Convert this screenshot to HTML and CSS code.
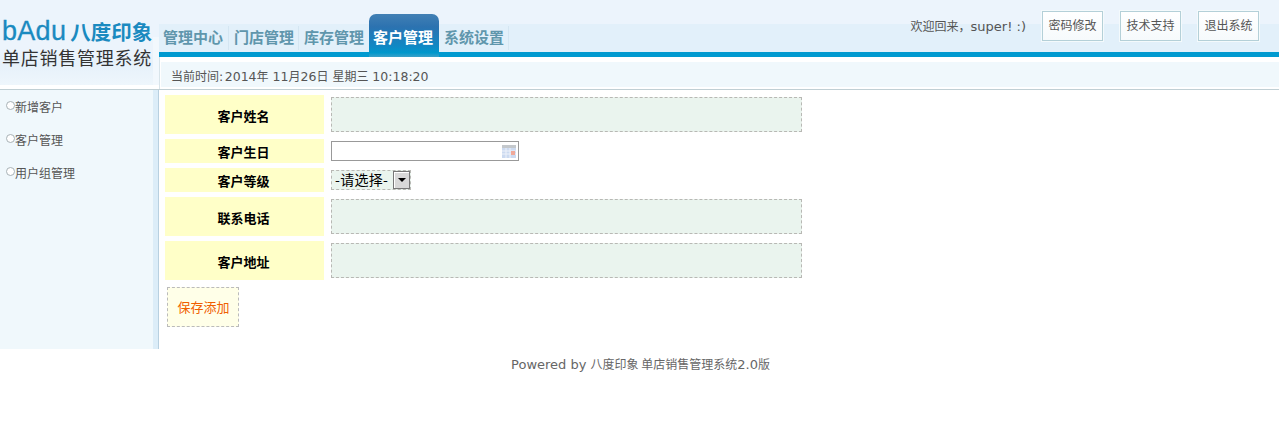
FILE: index.html
```html
<!DOCTYPE html>
<html lang="zh">
<head>
<meta charset="utf-8">
<title>客户管理</title>
<link rel="stylesheet" href="styles.css">
</head>
<body>
<header class="header">
  <div class="logo">
    <div class="logo-inner">
      <div class="logo-top"><span class="logo-en">bAdu</span><span class="logo-cn">八度印象</span></div>
      <div class="logo-sub">单店销售管理系统</div>
    </div>
  </div>
  <div class="header-main">
    <div class="topbar">
      <nav class="nav">
        <a class="nav-item">管理中心</a>
        <a class="nav-item">门店管理</a>
        <a class="nav-item nav-before">库存管理</a>
        <a class="nav-item nav-active">客户管理</a>
        <a class="nav-item">系统设置</a>
      </nav>
      <div class="user">
        <span class="welcome"><span class="cjk">欢迎回来，</span>super! :)</span>
        <a class="user-btn">密码修改</a>
        <a class="user-btn">技术支持</a>
        <a class="user-btn">退出系统</a>
      </div>
    </div>
    <div class="timebar"><span class="cjk time-label">当前时间</span>:<span class="time-date">2014</span><span class="cjk">年</span> 11<span class="cjk">月</span>26<span class="cjk">日</span> <span class="cjk">星期三</span> 10:18:20</div>
  </div>
</header>
<div class="body">
  <aside class="side">
    <ul class="side-list">
      <li class="side-item">新增客户</li>
      <li class="side-item">客户管理</li>
      <li class="side-item">用户组管理</li>
    </ul>
  </aside>
  <main class="main">
    <div class="row row-tall">
      <div class="label">客户姓名</div>
      <div class="field"><div class="input"></div></div>
    </div>
    <div class="row row-short">
      <div class="label">客户生日</div>
      <div class="field">
        <div class="date">
          <svg class="cal" width="14" height="13" viewBox="0 0 14 13">
            <rect x="0" y="0" width="14" height="13" fill="#ccdaf0"/>
            <rect x="0" y="0" width="14" height="3" fill="#c4c8cc"/>
            <path d="M0 6h14M0 9h14M4 3v10M8 3v10" stroke="#eef2fa" stroke-width="1"/>
            <rect x="9" y="6" width="4" height="4" fill="#f0a898"/>
          </svg>
        </div>
      </div>
    </div>
    <div class="row row-short">
      <div class="label">客户等级</div>
      <div class="field">
        <div class="select">
          <span class="select-text">-请选择-</span>
          <span class="select-btn"><i class="caret"></i></span>
        </div>
      </div>
    </div>
    <div class="row row-tall">
      <div class="label">联系电话</div>
      <div class="field"><div class="input"></div></div>
    </div>
    <div class="row row-tall">
      <div class="label">客户地址</div>
      <div class="field"><div class="input"></div></div>
    </div>
    <button class="save" type="button">保存添加</button>
  </main>
</div>
<footer class="footer">Powered by <span class="cjk">八度印象 单店销售管理系统</span>2.0<span class="cjk">版</span></footer>
</body>
</html>
```
FILE: styles.css
```css
* { box-sizing: border-box; }
html, body { margin: 0; padding: 0; }
body {
  background: #fff;
  font-family: "DejaVu Sans", "Noto Sans CJK SC", sans-serif;
  font-size: 13px;
  color: #555;
}
.cjk { font-family: "Noto Sans CJK SC", sans-serif; font-size: 12px; }
.header { display: flex; height: 90px; border-bottom: 1px solid #c0cfd4; background: #fff; }
.logo {
  width: 159px;
  height: 85px;
  flex: none;
  background: linear-gradient(#ecf4fc 0, #ecf4fc 37px, #f2f8fd 37px);
}
.logo-inner {
  width: 153px;
  height: 85px;
  padding: 17px 0 0 2px;
  background: linear-gradient(#ecf4fc 0, #ecf4fc 60%, #e6f1fa 75%, #eef6fc 100%);
}
.logo-top { display: flex; align-items: center; height: 28px; }
.logo-en { font-family: "Liberation Sans", sans-serif; font-size: 27px; color: #1a8ac0; letter-spacing: 0.3px; -webkit-text-stroke: 0.3px #1a8ac0; }
.logo-cn { font-family: "Noto Sans CJK SC", sans-serif; font-size: 20.5px; font-weight: 700; color: #1a8ac0; margin-left: 4px; line-height: 28px; white-space: nowrap; }
.logo-sub { font-family: "Noto Sans CJK SC", sans-serif; font-size: 18px; color: #333; line-height: 24px; letter-spacing: 0.75px; white-space: nowrap; }
.header-main {
  flex: 1;
  min-width: 0;
  background: linear-gradient(to right, #d8e4ea 1px, transparent 1px);
}
.topbar {
  height: 57px;
  display: flex;
  justify-content: space-between;
  border-bottom: 5px solid #009ad0;
  background: linear-gradient(#ecf4fc 0, #ecf4fc 24px, #e2f0fa 24px, #e2f0fa 100%);
}
.nav { display: flex; align-items: flex-end; height: 52px; }
.nav-item {
  font-family: "Noto Sans CJK SC", sans-serif;
  font-size: 15px;
  font-weight: 700;
  color: #5f96ac;
  height: 24px;
  line-height: 22px;
  padding: 0 0 0 5px;
  width: 70px;
  margin-bottom: 2px;
  white-space: nowrap;
  border-right: 1px solid #d4e6f2;
}
.nav-item:first-child { padding-left: 4px; }
.nav-before { width: 66px; border-right: 0; }
.nav-active {
  width: 70px;
  height: 43px;
  line-height: 46px;
  margin: 0 0 -5px 4px;
  padding: 0 0 0 4px;
  border: 0;
  border-radius: 7px 7px 0 0;
  color: #fff;
  background: linear-gradient(#4280b4 0, #2c72b0 30%, #1088c4 75%, #0098cc 90%, #3aa0c8 100%);
}
.user { display: flex; align-items: flex-start; padding: 11px 20px 0 0; }
.welcome { line-height: 30px; margin-right: 16px; height: 30px; white-space: nowrap; }
.user-btn {
  width: 61px;
  height: 30px;
  line-height: 28px;
  text-align: center;
  font-size: 12px;
  border: 1px solid #b4d0d8;
  outline: 1px solid #f4fafc;
  background: linear-gradient(#fff, #f6fafc);
  margin-left: 17px;
}
.welcome + .user-btn { margin-left: 0; }
.timebar {
  height: 25px;
  margin: 5px 0 0 2px;
  padding-left: 10px;
  font-size: 12.5px;
  line-height: 28px;
  background: #f0f8fc;
  white-space: nowrap;
}
.time-date { margin-left: 1.5px; }
.body { display: flex; height: 259px; }
.side {
  width: 159px;
  flex: none;
  background: #f0f8fc;
  border-right: 6px solid #dcedf8;
  position: relative;
}
.side::after { content: ""; position: absolute; top: 0; bottom: 0; right: -6px; width: 1px; background: #b8d0e0; }
.side-list { list-style: none; margin: 0; padding: 10px 0 0 0; }
.side-item {
  height: 33px;
  line-height: 16px;
  font-size: 12px;
  padding-left: 15px;
  position: relative;
  color: #555;
}
.side-item::before {
  content: "";
  position: absolute;
  left: 6px;
  top: 1px;
  width: 7px;
  height: 7px;
  border-radius: 50%;
  border: 1px solid #a8b2b6;
  background: #fff;
}
.main { flex: 1; padding: 5px 0 0 6px; min-width: 0; }
.row { display: flex; margin-bottom: 5px; }
.label {
  width: 159px;
  padding-right: 2px;
  background: #ffffc8;
  color: #000;
  font-family: "Noto Sans CJK SC", sans-serif;
  font-weight: 700;
  font-size: 13px;
  display: flex;
  align-items: center;
  justify-content: center;
}
.field { margin-left: 7px; display: flex; align-items: center; }
.row-tall { height: 39px; }
.row-tall .label { padding-top: 2px; }
.row-short { height: 24px; }
.row:last-of-type { margin-bottom: 7px; }
.input { width: 471px; height: 35px; background: #eaf4ee; border: 1px dashed #b8b8b4; }
.date {
  width: 188px;
  height: 20px;
  background: #fff;
  border: 1px solid #999;
  display: flex;
  align-items: center;
  justify-content: flex-end;
  padding-right: 2px;
}
.cal { display: block; }
.select {
  width: 80px;
  height: 20px;
  background: #eaf4ee;
  border: 1px dashed #b8b8b4;
  display: flex;
  align-items: center;
  color: #000;
  font-family: "Noto Sans CJK SC", sans-serif;
  font-size: 14px;
}
.select-text { width: 61px; padding: 0 0 2px 3px; letter-spacing: 0.3px; white-space: nowrap; }
.select-btn {
  width: 17px;
  height: 18px;
  background: #d8d8d8;
  border: 1px solid #777;
  box-shadow: inset 1px 1px 0 #fff;
  display: flex;
  align-items: center;
  justify-content: center;
}
.caret { width: 0; height: 0; border: 4px solid transparent; border-top-color: #000; border-bottom: 0; }
.save {
  display: block;
  width: 72px;
  height: 40px;
  margin-left: 2px;
  padding: 0 0 2px 1px;
  font-family: "Noto Sans CJK SC", sans-serif;
  font-size: 13px;
  color: #f06000;
  background: #ffffe8;
  border: 1px dashed #bbb;
}
.footer { height: 30px; padding-left: 2px; line-height: 30px; text-align: center; color: #666; }
```
